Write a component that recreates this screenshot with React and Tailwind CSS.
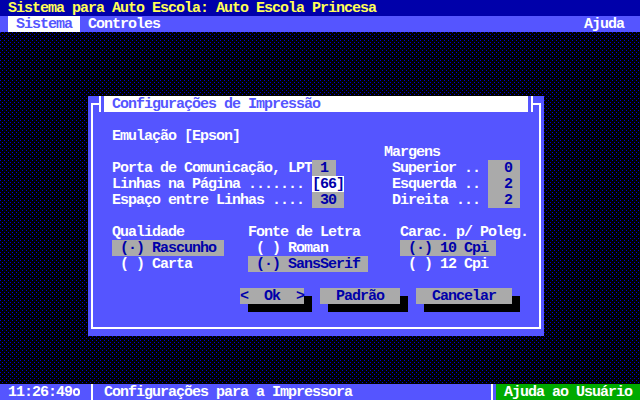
import React from "react";

function Row({ className = "", children }) {
  return <div className={"flex h-4 shrink-0 " + className}>{children}</div>;
}

function G({ children }) {
  return <span className="h-4 bg-[#aaaaaa] text-[#0000aa]">{children}</span>;
}

function Btn({ children, w }) {
  return (
    <span className={"h-4 bg-[#aaaaaa] text-[#0000aa] shadow-[8px_8px_0_#000] " + w}>
      {children}
    </span>
  );
}

function VLine() {
  return (
    <span className="w-2 h-4 flex">
      <span className="ml-[3px] w-[2px] h-4 bg-white" />
    </span>
  );
}

export default function App() {
  return (
    <div className="w-[640px] h-[400px] flex flex-col overflow-hidden font-['Liberation_Mono',monospace] font-bold text-[15px] tracking-[-1px] leading-[18px] text-white whitespace-pre">
      {/* title bar */}
      <Row className="bg-[#0000aa] text-[#ffff55] pl-2">
        <span>Sistema para Auto Escola: Auto Escola Princesa</span>
      </Row>
      {/* menu bar */}
      <Row className="bg-[#5555ff] pl-2">
        <span className="bg-white text-[#5555ff]"> Sistema </span>
        <span> Controles</span>
        <span className="flex-1" />
        <span>Ajuda  </span>
      </Row>
      {/* desktop */}
      <div className="flex-1 pt-16 pl-[88px] [background:conic-gradient(from_270deg_at_1px_1px,#0000cc_25%,transparent_0)_0_0/4px_4px,conic-gradient(from_270deg_at_1px_1px,#0000cc_25%,transparent_0)_2px_2px/4px_4px,#000]">
        <div className="relative w-[456px] h-[240px] bg-[#5555ff] flex flex-col">
          <div className="absolute top-[7px] left-[3px] right-[3px] bottom-[7px] border-2 border-white pointer-events-none" />
          <Row className="relative z-10">
            <span className="w-[11px]" />
            <span className="w-[2px] bg-white" />
            <span className="w-[3px] bg-[#5555ff]" />
            <span className="w-[424px] bg-white text-[#5555ff] pl-2">Configurações de Impressão</span>
            <span className="w-[3px] bg-[#5555ff]" />
            <span className="w-[2px] bg-white" />
          </Row>
          <Row />
          <Row className="pl-6">
            <span>Emulação [Epson]</span>
          </Row>
          <Row className="pl-[296px]">
            <span>Margens</span>
          </Row>
          <Row className="pl-6">
            <span>Porta de Comunicação, LPT</span>
            <G> 1 </G>
            <span>       Superior .. </span>
            <G>  0 </G>
          </Row>
          <Row className="pl-6">
            <span>Linhas na Página ....... </span>
            <span className="h-4 bg-white text-[#0000aa]">[66]</span>
            <span>      Esquerda .. </span>
            <G>  2 </G>
          </Row>
          <Row className="pl-6">
            <span>Espaço entre Linhas .... </span>
            <G> 30 </G>
            <span>      Direita ... </span>
            <G>  2 </G>
          </Row>
          <Row />
          <Row className="pl-6">
            <span>Qualidade        Fonte de Letra     Carac. p/ Poleg.</span>
          </Row>
          <Row className="pl-6">
            <G> (·) Rascunho </G>
            <span>    ( ) Roman         </span>
            <G> (·) 10 Cpi </G>
          </Row>
          <Row className="pl-6">
            <span> ( ) Carta       </span>
            <G> (·) SansSerif </G>
            <span>    </span>
            <span> ( ) 12 Cpi</span>
          </Row>
          <Row />
          <Row className="pl-[152px] gap-4">
            <Btn w="w-16">{"<  Ok  >"}</Btn>
            <Btn w="w-20">{"  Padrão  "}</Btn>
            <Btn w="w-24">{"  Cancelar  "}</Btn>
          </Row>
        </div>
      </div>
      {/* status bar */}
      <Row className="bg-[#5555ff]">
        <span className="w-2" />
        <span>11:26:49</span>
        <span className="w-2 h-4 flex justify-center">
          <span className="mt-1 w-[7px] h-[8px] rounded-full border-2 border-white" />
        </span>
        <span className="w-2" />
        <VLine />
        <span> Configurações para a Impressora</span>
        <span className="flex-1" />
        <VLine />
        <span className="w-[144px] h-4 bg-[#00aa00]"> Ajuda ao Usuário</span>
      </Row>
    </div>
  );
}
